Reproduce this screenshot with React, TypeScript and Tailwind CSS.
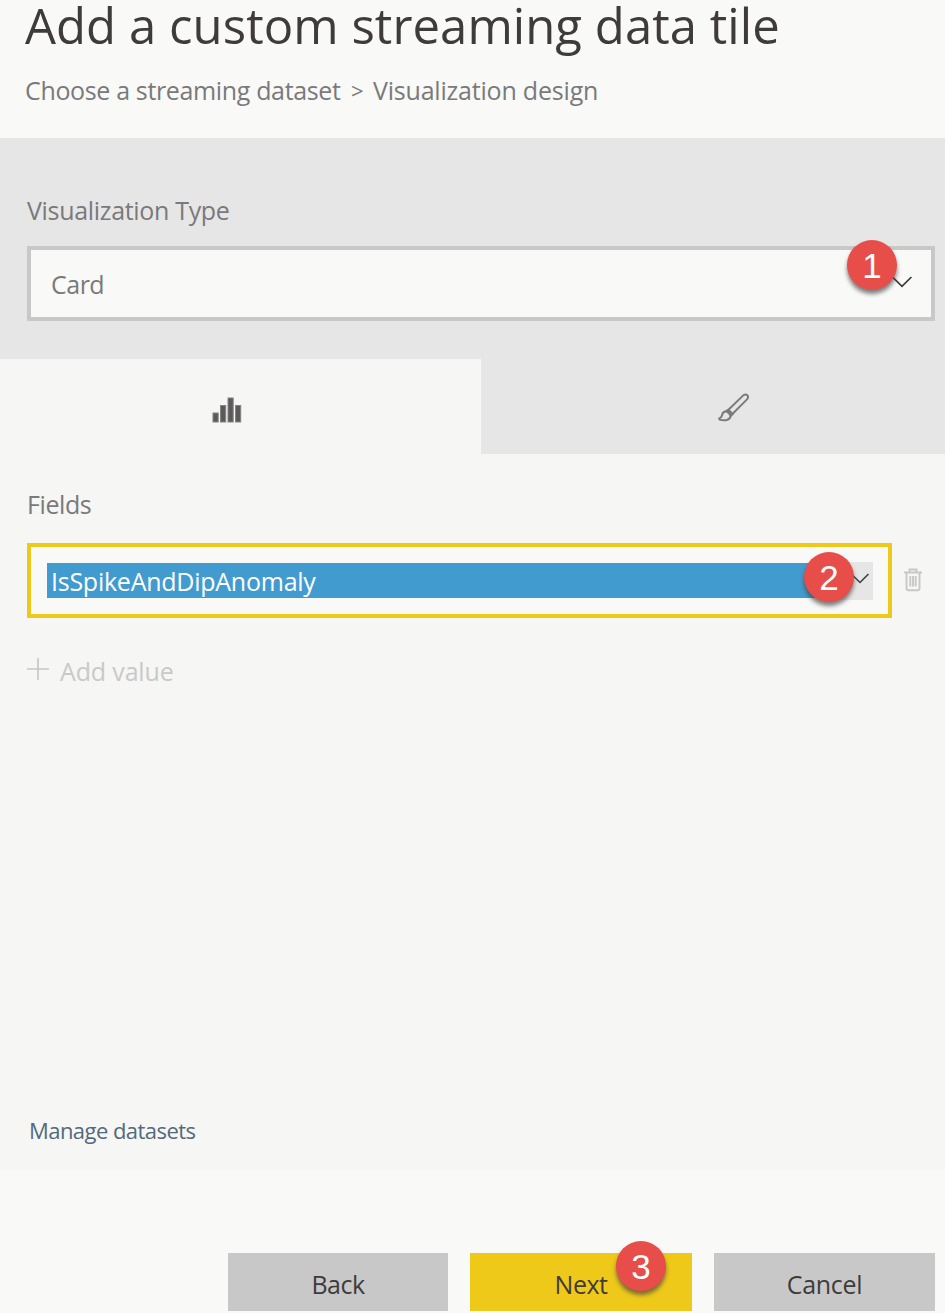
import React from 'react';

function Badge({ n, className }: { n: number; className: string }) {
  return (
    <span
      className={`absolute z-10 flex h-[50px] w-[50px] items-center justify-center rounded-full bg-[#e74d49] pt-px font-['Liberation_Sans',sans-serif] text-[35px] leading-none tracking-normal text-white shadow-[0_4px_4px_rgba(60,60,60,0.65)] ${className}`}
    >
      {n}
    </span>
  );
}

function Chevron({ className }: { className: string }) {
  return (
    <svg viewBox="0 0 20 12" className={className} fill="none" stroke="#3f3b3b" strokeWidth="1.7">
      <path d="M0.6 1.2 L10 10.4 L19.4 1" />
    </svg>
  );
}

function BarsIcon() {
  return (
    <svg viewBox="0 0 30 26" className="h-[26px] w-[30px]" fill="#5c595b" stroke="#858386" strokeWidth="1">
      <rect x="1" y="16" width="5.2" height="9" />
      <rect x="8.5" y="8.5" width="5.2" height="16.5" />
      <rect x="16" y="1" width="5.2" height="24" />
      <rect x="23.5" y="8.5" width="5.2" height="16.5" />
    </svg>
  );
}

function BrushIcon() {
  return (
    <svg viewBox="0 0 32 30" className="h-[30px] w-[32px]" fill="none" stroke="#7c7a7d" strokeWidth="2" strokeLinejoin="round">
      <path d="M10.2 17 L25.3 2.4 Q28 0.6 29.6 2.6 Q30.8 4.4 29 6.4 L14.4 21 Z" />
      <path d="M8 18.2 L10.2 16.8 L14.6 21.2 L12.6 23" />
      <path d="M8 18.2 Q4.6 18.8 4.1 22 Q3.7 24.6 1.2 25.4 L1.6 26.6 Q5.2 27.8 8.8 27 Q12.2 26 12.6 23 Q11.2 19.2 8 18.2 Z" />
    </svg>
  );
}

function TrashIcon() {
  return (
    <svg viewBox="0 0 18 24" className="h-6 w-[18px]" fill="none" stroke="#c8c8c8" strokeWidth="1.9">
      <path d="M0 4.5 H18 M5.5 4.5 V1.5 H12.5 V4.5 M2.5 4.5 V20.5 Q2.5 22.3 4.3 22.3 H13.7 Q15.5 22.3 15.5 20.5 V4.5" />
      <path d="M6.3 8 V18.5 M9 8 V18.5 M11.7 8 V18.5" />
    </svg>
  );
}

export default function App() {
  return (
    <main className="flex h-[1313px] w-[945px] flex-col overflow-hidden bg-[#f9f9f7] font-['Open_Sans','Noto_Sans',sans-serif] text-[25px] leading-[34px] whitespace-nowrap text-[#7a797c]">
      <header className="h-[138px] shrink-0 pl-[25px]">
        <h1 className="h-[50px] text-[49px] leading-[50px] tracking-[0.07px] text-[#3f3b3b]">
          Add a custom streaming data tile
        </h1>
        <p className="mt-[23px] flex">
          <span className="w-[326px] tracking-[-0.35px]">Choose a streaming dataset</span>
          <span className="w-[22px] text-[22px]">&gt;</span>
          <span className="tracking-[-0.2px]">Visualization design</span>
        </p>
      </header>

      <section className="flex h-[221px] shrink-0 flex-col bg-[#e6e6e6] pt-[55px] pr-[10px] pl-[27px]">
        <label className="tracking-[-0.32px]">Visualization Type</label>
        <div className="relative mt-[19px] flex h-[75px] items-center justify-between border-4 border-[#c8c8c8] bg-[#f9f9f7] pr-[19px] pl-5">
          <span className="tracking-[-0.5px]">Card</span>
          <Chevron className="-mt-1 h-3 w-5" />
          <Badge n={1} className="-top-[10px] right-[34px]" />
        </div>
      </section>

      <nav className="flex h-[95px] shrink-0">
        <div className="flex w-[481px] items-center bg-[#f6f6f5] pt-[6px] pl-[212px]">
          <BarsIcon />
        </div>
        <div className="flex flex-1 items-center bg-[#e6e6e6] pt-[3px] pl-[237px]">
          <BrushIcon />
        </div>
      </nav>

      <section className="flex h-[716px] shrink-0 flex-col bg-[#f6f6f5] pl-[27px]">
        <label className="mt-[33px] tracking-[-0.4px]">Fields</label>
        <div className="mt-[22px] flex items-center">
          <div className="relative flex h-[75px] w-[865px] items-center border-4 border-[#efc91a] bg-[#f9f9f7] pr-[15px] pl-4">
            <div className="h-[35px] flex-1 bg-[#429bcf] pl-1 leading-[36px] tracking-[-0.25px] text-white">IsSpikeAndDipAnomaly</div>
            <div className="flex h-[38px] w-[44px] items-center justify-end bg-[#e6e6e6] pr-1">
              <Chevron className="-mt-1 h-[11px] w-[18px]" />
            </div>
            <Badge n={2} className="top-[5px] right-[34px]" />
          </div>
          <span className="-mt-0.5 ml-3">
            <TrashIcon />
          </span>
        </div>
        <button className="mt-[36px] flex h-[34px] items-center tracking-[-0.15px] text-[#c9c9c9]">
          <svg viewBox="0 0 22 22" className="mr-[11px] -mt-[4px] h-[22px] w-[22px]" stroke="#c8c8c8" strokeWidth="1.7">
            <path d="M0 11 H22 M11 0 V22" />
          </svg>
          Add value
        </button>
        <a className="mt-auto mb-[25px] pl-[2px] text-[22px] leading-[30px] tracking-[-0.55px] text-[#536a7b]">Manage datasets</a>
      </section>

      <footer className="flex gap-[22px] pt-[83px] pl-[228px] text-[#3f3b3b]">
        <button className="h-[58px] w-[220px] bg-[#c8c8c8] pt-[3px] tracking-[-0.5px]">Back</button>
        <button className="relative h-[58px] w-[222px] bg-[#efc91a] pt-[3px] tracking-[-0.5px]">
          Next
          <Badge n={3} className="-top-[12px] right-[26px]" />
        </button>
        <button className="h-[58px] w-[221px] bg-[#c8c8c8] pt-[3px] tracking-[-0.3px]">Cancel</button>
      </footer>
    </main>
  );
}
